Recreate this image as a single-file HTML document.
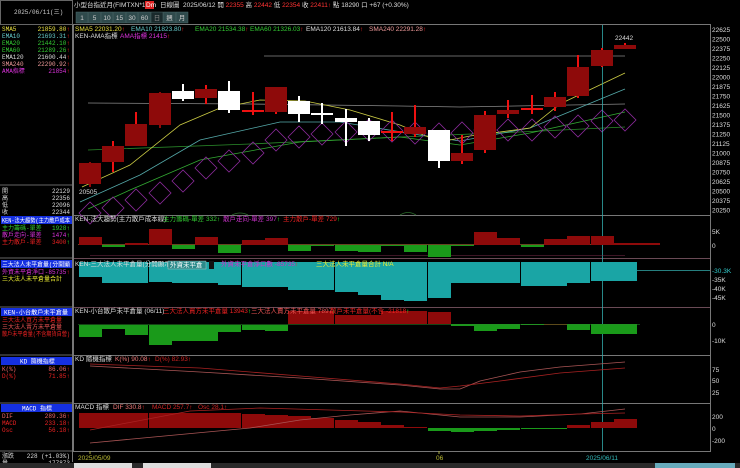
<!DOCTYPE html>
<html><head><meta charset="utf-8"><style>
body{margin:0;background:#000;width:740px;height:468px;overflow:hidden}
svg{display:block}
text{font-family:"Liberation Sans","Noto Sans CJK TC",sans-serif;font-size:6.5px}
.m{font-family:"Liberation Mono","Noto Sans CJK TC",monospace;font-size:6px}
</style></head><body>
<svg width="740" height="468" viewBox="0 0 740 468" xmlns="http://www.w3.org/2000/svg">
<rect width="740" height="468" fill="#000"/>
<rect x="0.5" y="0.5" width="72" height="24" fill="none" stroke="#666"/>
<line x1="72.5" y1="25" x2="72.5" y2="462" stroke="#777"/>
<text x="14" y="14" class="m" fill="#ccc">2025/06/11(三)</text>
<g class="m">
<text x="2" y="31" fill="#e8e040" class="m">SMA5</text><text x="70" y="31" fill="#e8e040" text-anchor="end" class="m">21859.80<tspan fill="#f22">↑</tspan></text>
<text x="2" y="38" fill="#6cc" class="m">EMA10</text><text x="70" y="38" fill="#6cc" text-anchor="end" class="m">21693.31<tspan fill="#f22">↑</tspan></text>
<text x="2" y="45" fill="#3c3" class="m">EMA20</text><text x="70" y="45" fill="#3c3" text-anchor="end" class="m">21442.10<tspan fill="#f22">↑</tspan></text>
<text x="2" y="52" fill="#3c3" class="m">EMA60</text><text x="70" y="52" fill="#3c3" text-anchor="end" class="m">21289.26<tspan fill="#f22">↑</tspan></text>
<text x="2" y="59" fill="#ddd" class="m">EMA120</text><text x="70" y="59" fill="#ddd" text-anchor="end" class="m">21600.44<tspan fill="#f22">↑</tspan></text>
<text x="2" y="66" fill="#e99" class="m">SMA240</text><text x="70" y="66" fill="#e99" text-anchor="end" class="m">22290.92<tspan fill="#f22">↑</tspan></text>
<text x="2" y="73" fill="#d3d" class="m">AMA指標</text><text x="70" y="73" fill="#d3d" text-anchor="end" class="m">21854<tspan fill="#f22">↑</tspan></text>
</g>
<line x1="0" y1="185" x2="72" y2="185" stroke="#666"/>
<text x="2" y="193" fill="#ddd" class="m">開</text><text x="70" y="193" fill="#ddd" text-anchor="end" class="m">22129</text>
<text x="2" y="200" fill="#ddd" class="m">高</text><text x="70" y="200" fill="#ddd" text-anchor="end" class="m">22356</text>
<text x="2" y="207" fill="#ddd" class="m">低</text><text x="70" y="207" fill="#ddd" text-anchor="end" class="m">22096</text>
<text x="2" y="214" fill="#ddd" class="m">收</text><text x="70" y="214" fill="#ddd" text-anchor="end" class="m">22344</text>
<rect x="1" y="216" width="71" height="8" fill="#1530e0"/>
<text x="2" y="222.5" fill="#fff" class="m" textLength="68" lengthAdjust="spacingAndGlyphs">KEN-法大趨勢(主力散戶成本</text>
<text x="2" y="230" fill="#3c3" class="m">主力籌碼-單差</text><text x="70" y="230" fill="#3c3" text-anchor="end" class="m">1928<tspan fill="#3f3">↑</tspan></text>
<text x="2" y="237" fill="#d3d" class="m">散戶走向-單差</text><text x="70" y="237" fill="#d3d" text-anchor="end" class="m">1474<tspan fill="#3f3">↑</tspan></text>
<text x="2" y="244" fill="#e22" class="m">主力散戶-單差</text><text x="70" y="244" fill="#e22" text-anchor="end" class="m">3400<tspan fill="#3f3">↑</tspan></text>
<line x1="0" y1="258" x2="72" y2="258" stroke="#666"/>
<rect x="1" y="260" width="71" height="8" fill="#1530e0"/>
<text x="2" y="266.5" fill="#fff" class="m" textLength="68" lengthAdjust="spacingAndGlyphs">三大法人未平倉量(分開顯</text>
<text x="2" y="274" fill="#d3d" class="m">外資未平倉淨口</text><text x="70" y="274" fill="#d3d" text-anchor="end" class="m">-85735<tspan fill="#f22">↑</tspan></text>
<text x="2" y="281" fill="#ee3" class="m">三大法人未平倉量合計</text>
<line x1="0" y1="307" x2="72" y2="307" stroke="#666"/>
<rect x="1" y="308" width="71" height="8" fill="#1530e0"/>
<text x="4" y="314.5" fill="#fff" class="m" textLength="64" lengthAdjust="spacingAndGlyphs">KEN-小台散戶未平倉量</text>
<text x="2" y="322" fill="#e22" class="m">三大法人買方未平倉量</text>
<text x="2" y="329" fill="#e55" class="m">三大法人賣方未平倉量</text>
<text x="2" y="336" fill="#e22" class="m" textLength="68" lengthAdjust="spacingAndGlyphs">散戶未平倉量(不含期貨自營)</text>
<line x1="0" y1="355" x2="72" y2="355" stroke="#666"/>
<rect x="1" y="357" width="71" height="8" fill="#1530e0"/>
<text x="20" y="363.5" fill="#fff" class="m">KD 隨機指標</text>
<text x="2" y="371" fill="#e66" class="m">K(%)</text><text x="70" y="371" fill="#e66" text-anchor="end" class="m">86.06<tspan fill="#f22">↑</tspan></text>
<text x="2" y="378" fill="#e22" class="m">D(%)</text><text x="70" y="378" fill="#e22" text-anchor="end" class="m">71.85<tspan fill="#f22">↑</tspan></text>
<line x1="0" y1="403" x2="72" y2="403" stroke="#666"/>
<rect x="1" y="404" width="71" height="8" fill="#1530e0"/>
<text x="22" y="410.5" fill="#fff" class="m">MACD 指標</text>
<text x="2" y="418" fill="#e66" class="m">DIF</text><text x="70" y="418" fill="#e66" text-anchor="end" class="m">289.36<tspan fill="#f22">↑</tspan></text>
<text x="2" y="425" fill="#e22" class="m">MACD</text><text x="70" y="425" fill="#e22" text-anchor="end" class="m">233.18<tspan fill="#f22">↑</tspan></text>
<text x="2" y="432" fill="#e22" class="m">Osc</text><text x="70" y="432" fill="#e22" text-anchor="end" class="m">56.18<tspan fill="#f22">↑</tspan></text>
<line x1="0" y1="451" x2="72" y2="451" stroke="#666"/>
<text x="2" y="458" fill="#ddd" class="m">漲跌</text><text x="70" y="458" fill="#ddd" text-anchor="end" class="m">228 (+1.03%)</text>
<text x="2" y="465" fill="#ddd" class="m">量</text><text x="70" y="465" fill="#ddd" text-anchor="end" class="m">177873</text>

<text x="74" y="7" fill="#ddd">小型台指近月(FIMTXN*1)</text>
<rect x="145" y="1" width="9" height="8" fill="#d22"/><text x="146" y="7" fill="#fff" font-size="4">Dm</text>
<text x="160" y="7" fill="#ddd">日線圖</text>
<text x="183" y="7" fill="#ddd">2025/06/12 開 <tspan fill="#f33">22355</tspan> 高 <tspan fill="#f33">22442</tspan> 低 <tspan fill="#f33">22354</tspan> 收 <tspan fill="#f33">22411</tspan><tspan fill="#f22">↑</tspan> 點 18290 口 +67 (+0.30%)</text>
<g fill="#2f4a4c" stroke="#4a6a6a" stroke-width="0.5">
<rect x="76" y="12" width="12" height="11"/><rect x="88.5" y="12" width="12" height="11"/><rect x="101" y="12" width="12" height="11"/><rect x="113.5" y="12" width="12" height="11"/><rect x="126" y="12" width="12" height="11"/><rect x="138.5" y="12" width="12" height="11"/><rect x="151" y="12" width="12" height="11" fill="#1a2a2c"/><rect x="163.5" y="12" width="12" height="11"/><rect x="176" y="12" width="12" height="11"/>
</g>
<g fill="#ccc" text-anchor="middle" font-size="7">
<text x="82" y="20" font-size="7">1</text><text x="94.5" y="20" font-size="7">5</text><text x="107" y="20" font-size="7">10</text><text x="119.5" y="20" font-size="7">15</text><text x="132" y="20" font-size="7">30</text><text x="144.5" y="20" font-size="7">60</text><text x="157" y="20" fill="#888" font-size="7">日</text><text x="169.5" y="20" font-size="7">週</text><text x="182" y="20" font-size="7">月</text>
</g>

<g stroke="#777" fill="none">
<rect x="73.5" y="24.5" width="637" height="427"/>
<line x1="74" y1="215.5" x2="710" y2="215.5"/>
<line x1="74" y1="258.5" x2="710" y2="258.5" stroke="#6a4a55"/>
<line x1="74" y1="307.5" x2="710" y2="307.5" stroke="#6a4a55"/>
<line x1="74" y1="355.5" x2="710" y2="355.5"/>
<line x1="74" y1="403.5" x2="710" y2="403.5"/>
</g>
<text x="75" y="31" fill="#e8e040">SMA5 22031.20<tspan fill="#f22">↑</tspan></text>
<text x="131" y="31" fill="#6cc">EMA10 21823.80<tspan fill="#f22">↑</tspan></text>
<text x="195" y="31" fill="#3c3">EMA20 21534.38<tspan fill="#f22">↑</tspan></text>
<text x="250" y="31" fill="#3c3">EMA60 21326.03<tspan fill="#f22">↑</tspan></text>
<text x="306" y="31" fill="#ddd">EMA120 21613.84<tspan fill="#f22">↑</tspan></text>
<text x="369" y="31" fill="#e99">SMA240 22291.28<tspan fill="#f22">↑</tspan></text>
<text x="75" y="38" fill="#ddd">KEN-AMA指標</text>
<text x="120" y="38" fill="#d3d">AMA指標 21415<tspan fill="#f22">↑</tspan></text>

<g fill="#ddd" font-size="6.5">
<text x="712" y="32">22625</text><text x="712" y="41.5">22500</text><text x="712" y="51">22375</text><text x="712" y="60.5">22250</text><text x="712" y="70">22125</text><text x="712" y="79.5">22000</text><text x="712" y="89">21875</text><text x="712" y="98.5">21750</text><text x="712" y="108">21625</text><text x="712" y="117.5">21500</text><text x="712" y="127">21375</text><text x="712" y="136.5">21250</text><text x="712" y="146">21125</text><text x="712" y="155.5">21000</text><text x="712" y="165">20875</text><text x="712" y="174.5">20750</text><text x="712" y="184">20625</text><text x="712" y="193.5">20500</text><text x="712" y="203">20375</text><text x="712" y="212.5">20250</text>
<text x="712" y="234">5K</text><text x="712" y="248">0</text>
<text x="712" y="273" fill="#3cc">-30.3K</text><text x="712" y="282">-35K</text><text x="712" y="291">-40K</text><text x="712" y="300">-45K</text>
<text x="712" y="327">0</text><text x="712" y="343">-10K</text>
<text x="712" y="372">75</text><text x="712" y="383">50</text><text x="712" y="395">25</text>
<text x="712" y="419">200</text><text x="712" y="431">0</text><text x="712" y="443">-200</text>
</g>

<g fill="none" stroke-width="0.8">
<polyline stroke="#888" points="264,56 625,56"/>
<polyline stroke="#888" points="88,103 250,104 400,106 460,107 625,104"/>
<polyline stroke="#2a8a2a" points="88,150 250,144 400,137 520,132 625,127"/>
<polyline stroke="#3a3" points="88,209 130,190 200,160 300,142 400,137 460,145 530,133 625,112"/>
<polyline stroke="#5aa" points="80,202 140,175 200,140 280,122 340,122 420,135 460,141 530,128 625,89"/>
<polyline stroke="#cc4" points="82,187 130,165 180,125 220,108 260,100 305,101 350,110 400,125 440,142 470,136 530,128 560,104 625,73"/>
</g>
<g fill="none" stroke="#8a2a9a" stroke-width="0.8" id="dia"></g>
<line x1="602.5" y1="25" x2="602.5" y2="451" stroke="#3aa" stroke-width="0.8"/>
<g id="cdl"></g>
<text x="79" y="194" fill="#ddd" font-size="6">20505</text>
<text x="615" y="40" fill="#ddd" font-size="6">22442</text>
<path d="M232,215 Q240,211 248,215 M400,215 Q408,210 416,215" stroke="#2a6a2a" fill="none" stroke-width="0.8"/>

<text x="75" y="221" fill="#ddd">KEN-法大趨勢(主力散戶成本線)</text>
<text x="163" y="221" fill="#3c3">主力籌碼-單差 332<tspan fill="#3f3">↑</tspan></text>
<text x="223" y="221" fill="#c3c">散戶走向-單差 397<tspan fill="#3f3">↑</tspan></text>
<text x="283" y="221" fill="#e22">主力散戶-單差 729<tspan fill="#3f3">↑</tspan></text>
<line x1="78" y1="244.5" x2="660" y2="244.5" stroke="#c84" stroke-width="0.6"/>
<line x1="90" y1="255.5" x2="625" y2="255.5" stroke="#7a2a4a" stroke-width="0.6"/>
<g id="p1"></g>
<g id="p2"></g>
<line x1="637" y1="270.5" x2="710" y2="270.5" stroke="#3aa" stroke-width="0.8"/>
<text x="75" y="266" fill="#ddd">KEN-三大法人未平倉量(分開顯示)</text>
<rect x="168" y="261" width="38" height="8" fill="#2a8a8a" stroke="#ccc" stroke-width="0.4"/>
<text x="170" y="267" fill="#fff">外資未平倉</text>
<rect x="209" y="261" width="5" height="8" fill="#111"/>
<text x="221" y="266" fill="#c3c">外資未平倉淨口數 -85735<tspan fill="#f22">↑</tspan></text>
<text x="316" y="266" fill="#ee3">三大法人未平倉量合計 N/A</text>
<g id="p3"></g>
<line x1="78" y1="324.5" x2="640" y2="324.5" stroke="#2a8a2a" stroke-width="0.5"/>
<text x="75" y="313" fill="#ddd">KEN-小台散戶未平倉量 (06/11)</text>
<text x="163" y="313" fill="#e22">三大法人買方未平倉量 13943<tspan fill="#3f3">↑</tspan></text>
<text x="251" y="313" fill="#e55">三大法人賣方未平倉量 7897<tspan fill="#3f3">↑</tspan></text>
<text x="330" y="313" fill="#e22">散戶未平倉量(不含 -21818<tspan fill="#3f3">↑</tspan></text>
<text x="75" y="361" fill="#ddd">KD 隨機指標</text>
<text x="115" y="361" fill="#e77">K(%) 90.08<tspan fill="#f22">↑</tspan></text>
<text x="155" y="361" fill="#c22">D(%) 82.93<tspan fill="#f22">↑</tspan></text>
<g fill="none" stroke-width="0.8">
<polyline stroke="#a55" points="90,366 200,372 300,378 400,385 440,389 460,389 480,381 520,372 560,367 625,362"/>
<polyline stroke="#a22" points="90,364 200,368 300,376 400,384 440,388 460,386 500,381 560,373 625,368"/>
</g>
<text x="75" y="409" fill="#ddd">MACD 指標</text>
<text x="113" y="409" fill="#e77">DIF 330.8<tspan fill="#f22">↑</tspan></text>
<text x="152" y="409" fill="#c22">MACD 257.7<tspan fill="#f22">↑</tspan></text>
<text x="198" y="409" fill="#c22">Osc 28.1<tspan fill="#f22">↑</tspan></text>
<g id="p5"></g>
<g fill="none" stroke-width="0.8">
<polyline stroke="#a55" points="90,443 250,428 300,420 350,415 400,411 460,417 520,417 580,414 625,409"/>
<polyline stroke="#a22" points="90,430 190,411 260,408 400,412 460,415 520,416 580,414 625,413"/>
</g>
<line x1="90" y1="451" x2="90" y2="454" stroke="#aa4"/>
<line x1="439" y1="451" x2="439" y2="454" stroke="#aa4"/>
<text x="78" y="460" fill="#bb3" font-size="6.5">2025/05/09</text>
<text x="436" y="460" fill="#bb3" font-size="6.5">06</text>
<text x="586" y="460" fill="#3bb" font-size="6.5">2025/06/11</text>
<rect x="0" y="463" width="740" height="5" fill="#2a2a2a"/>
<rect x="74" y="463" width="58" height="5" fill="#ddd"/>
<rect x="143" y="463" width="68" height="5" fill="#ddd"/>
<rect x="655" y="463" width="80" height="5" fill="#6ab"/>
</svg>
<script>
var NS="http://www.w3.org/2000/svg";
function R(g,x,y,w,h,f){var r=document.createElementNS(NS,"rect");r.setAttribute("x",x);r.setAttribute("y",y);r.setAttribute("width",w);r.setAttribute("height",h);r.setAttribute("fill",f);document.getElementById(g).appendChild(r);}
var X=[79,102,125,149,172,195,218,242,265,288,311,335,358,381,404,428,451,474,497,521,544,567,591,614];
var D="#8e0a0a",B="#ee1111",W="#fff";
var C=[[163,184,162,187,D,D],[146,162,141,172,D,B],[124,146,112,146,D,B],[93,125,92,128,D,D],[91,99,84,101,W,W],[89,98,85,104,D,B],[91,110,81,113,W,W],[110,112,92,115,B,B],[87,112,87,114,D,B],[101,114,96,122,W,W],[113,115,103,124,W,W],[118,122,109,146,W,W],[121,135,118,141,W,W],[131,133,112,141,B,B],[127,134,105,137,D,B],[130,161,130,168,W,W],[153,161,135,164,D,B],[115,150,111,153,D,B],[110,114,100,118,D,B],[108,110,95,114,B,B],[97,107,92,111,D,B],[67,96,55,98,D,B],[50,66,48,67,D,B],[45,49,43,49,D,B]];
C.forEach(function(c,i){var x=X[i];R("cdl",x+10,c[2],2,c[3]-c[2],c[5]);R("cdl",x,c[0],22,Math.max(2,c[1]-c[0]),c[4]);});
var Dy=[213,208,200,193,181,168,161,153,140,137,134,132,130,131,133,134,133,130,130,130,127,126,121,120];
var dg=document.getElementById("dia");
X.forEach(function(x,i){var cx=x+11,cy=Dy[i];var p=document.createElementNS(NS,"polygon");p.setAttribute("points",(cx-11)+","+cy+" "+cx+","+(cy-11)+" "+(cx+11)+","+cy+" "+cx+","+(cy+11));dg.appendChild(p);});
var G="#1a9a1a",RR="#8e0a0a";
var P1=[[237,245,RR],[245,247,G],[243,245,RR],[229,245,RR],[245,249,G],[237,245,RR],[245,253,G],[240,245,RR],[238,245,RR],[245,251,G],[245,246,G],[245,251,G],[245,252,G],[245,246,G],[245,252,G],[245,257,G],[245,246,G],[232,245,RR],[238,245,RR],[245,247,G],[239,245,RR],[236,245,RR],[236,245,RR],[243,245,RR]];
P1.forEach(function(b,i){R("p1",X[i],b[0],23,b[1]-b[0],b[2]);});
R("p1",637,243,23,2,RR);
var P2=[277,283,283,282,283,283,285,287,287,290,290,292,295,300,301,298,283,283,283,286,286,283,281,281];
P2.forEach(function(b,i){R("p2",X[i],262,23,b-262,"#1aa5a5");});
var P3=[[325,337,G],[325,329,G],[325,335,G],[325,345,G],[325,341,G],[325,341,G],[325,332,G],[325,330,G],[325,331,G],[311,324,RR],[311,324,RR],[315,324,RR],[315,324,RR],[311,324,RR],[311,324,RR],[312,324,RR],[324,326,G],[324,331,G],[324,329,G],[324,325,G],[324,325,RR],[324,330,G],[324,334,G],[324,334,G]];
P3.forEach(function(b,i){R("p3",X[i],b[0],23,b[1]-b[0],b[2]);});
var P5=[[413,428,RR],[413,428,RR],[413,428,RR],[413,428,RR],[413,428,RR],[413,428,RR],[413,428,RR],[414,428,RR],[415,428,RR],[416,428,RR],[418,428,RR],[420,428,RR],[422,428,RR],[425,428,RR],[427,428,RR],[428,431,G],[428,432,G],[428,431,G],[428,430,G],[428,429,G],[428,429,G],[425,428,RR],[422,428,RR],[419,428,RR]];
P5.forEach(function(b,i){R("p5",X[i],b[0],23,b[1]-b[0],b[2]);});
</script>
</body></html>
